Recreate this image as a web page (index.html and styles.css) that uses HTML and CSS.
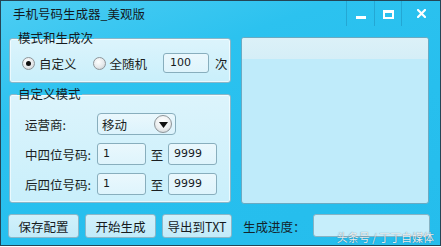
FILE: index.html
```html
<!DOCTYPE html>
<html lang="zh-CN">
<head>
<meta charset="utf-8">
<title>手机号码生成器_美观版</title>
<link rel="stylesheet" href="styles.css">
</head>
<body>
<div class="window">
  <div class="titlebar">
    <div class="title">手机号码生成器_美观版</div>
    <div class="controls">
      <div class="ctl ctl-min"><span class="min-bar"></span></div>
      <div class="ctl ctl-max"><span class="max-box"></span></div>
      <div class="ctl ctl-close">
        <svg width="9" height="9" viewBox="0 0 9 9"><path d="M1 1 L8 8 M8 1 L1 8" stroke="#fff" stroke-width="2.2" stroke-linecap="square"/></svg>
      </div>
    </div>
  </div>
  <div class="main">
    <div class="leftcol">
      <fieldset class="group group1">
        <legend>模式和生成次</legend>
        <div class="moderow">
          <span class="radio checked"></span><span class="rlabel">自定义</span>
          <span class="radio radio2"></span><span class="rlabel">全随机</span>
          <span class="field count">100</span><span class="unit">次</span>
        </div>
      </fieldset>
      <fieldset class="group group2">
        <legend>自定义模式</legend>
        <div class="rows">
          <div class="row">
            <span class="lbl">运营商:</span>
            <div class="combo"><span>移动</span><span class="combo-btn"><svg width="9" height="6" viewBox="0 0 9 6"><path d="M0 0 H9 L4.5 6 Z" fill="#111"/></svg></span></div>
          </div>
          <div class="row">
            <span class="lbl">中四位号码:</span>
            <span class="field num">1</span><span class="to">至</span><span class="field num">9999</span>
          </div>
          <div class="row">
            <span class="lbl">后四位号码:</span>
            <span class="field num">1</span><span class="to">至</span><span class="field num">9999</span>
          </div>
        </div>
      </fieldset>
    </div>
    <div class="output"><div class="output-top"></div></div>
  </div>
  <div class="bottom">
    <button class="btn">保存配置</button>
    <button class="btn">开始生成</button>
    <button class="btn">导出到TXT</button>
    <span class="plabel">生成进度：</span>
    <div class="progress"></div>
  </div>
  <div class="watermark">头条号 / 丁丁自媒体</div>
</div>
</body>
</html>
```
FILE: styles.css
```css
html, body {
  margin: 0;
  padding: 0;
  background: #ffffff;
}
body {
  font-family: "Noto Sans CJK SC", "Noto Sans", sans-serif;
  font-size: 12px;
  color: #1b1f22;
}
.window {
  position: relative;
  width: 441px;
  height: 246px;
  box-sizing: border-box;
  border: 1px solid #244556;
  background: linear-gradient(160deg, #4dcdf3 0%, #2cc2ef 30%, #27bfee 60%, #25bdec 100%);
  display: flex;
  flex-direction: column;
  overflow: hidden;
}
.titlebar {
  height: 30px;
  display: flex;
  align-items: flex-start;
  justify-content: space-between;
  flex-shrink: 0;
}
.title {
  padding: 5px 0 0 12px;
  font-size: 12.5px;
  line-height: 16px;
  color: #131a1e;
}
.controls {
  display: flex;
  height: 25px;
}
.ctl {
  height: 25px;
  display: flex;
  align-items: center;
  justify-content: center;
  border-left: 1px solid rgba(20, 110, 150, 0.3);
}
.ctl-min { width: 27px; }
.ctl-max { width: 26px; }
.ctl-close { width: 38px; }
.min-bar {
  width: 10px;
  height: 3px;
  background: #fff;
  margin-top: 8px;
}
.max-box {
  width: 7px;
  height: 4px;
  border: 2px solid #fff;
  border-top-width: 3px;
  margin-top: 1px;
}

.main {
  display: flex;
  padding: 0 11px 0 8px;
  flex-shrink: 0;
}
.leftcol {
  width: 222px;
  display: flex;
  flex-direction: column;
}
.group {
  margin: 0;
  padding: 0;
  min-width: 0;
  border: 1px solid #8ab6c8;
  border-radius: 3px;
  background: linear-gradient(#dcf4fc, #c9effb);
  box-shadow: inset 0 0 0 1px rgba(255, 255, 255, 0.6);
}
.group legend {
  margin-left: 7px;
  padding: 0 1px;
  font-size: 12.5px;
  line-height: 14px;
  color: #151b1f;
}
.moderow {
  display: flex;
  align-items: center;
  height: 20px;
  padding: 8px 0 9px 12px;
}
.radio {
  width: 11px;
  height: 11px;
  border-radius: 50%;
  border: 1px solid #8e9599;
  background: radial-gradient(circle at 40% 35%, #ffffff 0%, #e6e9eb 55%, #bfc5c9 100%);
  display: inline-flex;
  align-items: center;
  justify-content: center;
  flex-shrink: 0;
}
.radio.checked::after {
  content: "";
  width: 5px;
  height: 5px;
  border-radius: 50%;
  background: #111;
}
.rlabel {
  margin-left: 4px;
  font-size: 12.5px;
}
.radio2 { margin-left: 16px; }
.field {
  box-sizing: border-box;
  height: 20px;
  border: 1px solid #88aebd;
  border-radius: 3px;
  background: linear-gradient(#eaf8fd, #def4fc);
  font-family: "DejaVu Sans", sans-serif;
  font-size: 11px;
  line-height: 18px;
  padding-left: 6px;
  color: #161b1e;
}
.count {
  width: 46px;
  margin-left: 16px;
}
.unit {
  margin-left: 6px;
  font-size: 12.5px;
}

.group2 {
  margin-top: 4px;
}
.rows {
  padding: 12px 0 7px 15px;
  display: flex;
  flex-direction: column;
  gap: 8px;
}
.row {
  display: flex;
  align-items: center;
  height: 22px;
}
.lbl {
  width: 72px;
  font-size: 12.5px;
}
.combo {
  box-sizing: border-box;
  width: 79px;
  height: 22px;
  border: 1px solid #88aebd;
  border-radius: 4px;
  background: linear-gradient(#eaf8fd, #dcf3fc);
  display: flex;
  align-items: center;
  justify-content: space-between;
  padding: 0 3px 0 4px;
  font-size: 12.5px;
}
.combo-btn {
  box-sizing: border-box;
  width: 18px;
  height: 18px;
  border-radius: 50%;
  border: 1px solid #8d9498;
  background: radial-gradient(circle at 50% 35%, #ffffff 0%, #eef0f1 55%, #c9ced1 100%);
  display: flex;
  align-items: center;
  justify-content: center;
}
.combo-btn svg { margin-top: 1px; }
.num {
  width: 49px;
  height: 22px;
  line-height: 20px;
  padding-left: 5px;
}
.to {
  width: 22px;
  text-align: center;
  font-size: 12.5px;
}

.output {
  box-sizing: border-box;
  margin: 6px 0 0 10px;
  width: 188px;
  height: 167px;
  border: 1px solid #6aaac2;
  border-radius: 3px;
  background: #bfebfa;
  overflow: hidden;
}
.output-top {
  height: 21px;
  background: linear-gradient(#dcf1f8, #d5eef7);
}

.bottom {
  display: flex;
  align-items: center;
  padding: 0 0 0 7px;
  margin-top: 10px;
  height: 24px;
}
.btn {
  box-sizing: border-box;
  height: 24px;
  border: 1px solid #8cb7c8;
  border-radius: 3px;
  background: linear-gradient(#d2f1fb, #c2ebf9);
  font-family: "Noto Sans CJK SC", "Liberation Sans", sans-serif;
  font-size: 12.5px;
  color: #161b1e;
  padding: 0;
  margin: 0 6px 0 0;
}
.btn:nth-of-type(1) { width: 71px; }
.btn:nth-of-type(2) { width: 71px; }
.btn:nth-of-type(3) { width: 70px; margin-right: 11px; }
.plabel {
  width: 70px;
  font-size: 12.5px;
  color: #14242c;
}
.progress {
  box-sizing: border-box;
  width: 117px;
  height: 23px;
  margin-top: -2px;
  border: 1px solid #86b3c4;
  border-radius: 3px;
  background: #c6eefb;
}
.watermark {
  position: absolute;
  right: 6px;
  bottom: 1px;
  font-size: 11px;
  line-height: 14px;
  color: rgba(255, 255, 255, 0.9);
  text-shadow: 0 0 1px rgba(40, 70, 90, 0.8);
}
```
